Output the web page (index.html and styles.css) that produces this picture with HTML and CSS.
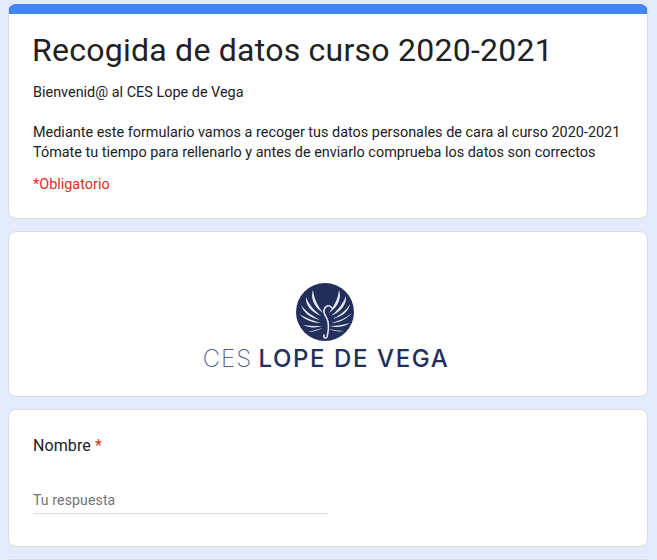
FILE: index.html
```html
<!DOCTYPE html>
<html lang="es">
<head>
  <meta charset="UTF-8" />
  <meta name="viewport" content="width=device-width, initial-scale=1.0"/>
  <title>Recogida de datos curso 2020-2021</title>
  <link rel="stylesheet" href="styles.css">
</head>
<body>
  <form class="form">
    <div class="card header">
      <h1>Recogida de datos curso 2020-2021</h1>
      <p class="intro">Bienvenid@ al CES Lope de Vega</p>
      <p class="desc">Mediante este formulario vamos a recoger tus datos personales de cara al curso 2020-2021<br>Tómate tu tiempo para rellenarlo y antes de enviarlo comprueba los datos son correctos</p>
      <p class="required">*Obligatorio</p>
    </div>

    <div class="card logo-card">
      <svg class="logo" viewBox="0 0 58 58" aria-hidden="true">
        <circle cx="29" cy="29" r="29" fill="#222f5b"/>
        <g fill="#e4e7ef">
          <path d="M17 7C14 15 18 24 27 30C22 23 18 16 17 7Z"/>
          <path d="M10 14C9 22 15 29 25 33C19 28 13 22 10 14Z"/>
          <path d="M5 22C7 29 14 35 24 37C17 33 10 29 5 22Z"/>
          <path d="M3 31C9 37 17 40 25 40C17 38 10 35 3 31Z"/>
          <path d="M7 42C13 45 20 45 26 43C20 43 13 43 7 42Z"/>
          <path d="M12 49C17 49 23 47 27 45C22 46 17 48 12 49Z"/>
          <path d="M43 7C46 15 42 24 33 30C38 23 42 16 43 7Z"/>
          <path d="M50 13C51 21 45 29 35 33C41 28 47 21 50 13Z"/>
          <path d="M54 21C53 28 46 34 36 36C43 33 50 28 54 21Z"/>
          <path d="M56 30C51 36 43 40 35 40C43 38 50 35 56 30Z"/>
          <path d="M54 40C48 44 40 45 34 43C40 43 47 42 54 40Z"/>
          <path d="M48 48C43 49 37 48 33 46C38 47 43 48 48 48Z"/>
        </g>
        <path class="bird" d="M36 25C33 21 29 23 28 27C27 31 31 34 32 39C33 44 32 50 31 54C30 56 27 55 28 52"/>
      </svg>
      <div class="logo-text"><span class="thin">CES</span> <span class="name">LOPE DE VEGA</span></div>
    </div>

    <div class="card question">
      <div class="label">Nombre <span class="star">*</span></div>
      <input class="answer" type="text" placeholder="Tu respuesta">
    </div>

    <div class="card next"></div>
  </form>
</body>
</html>
```

FILE: styles.css
```css
* { box-sizing: border-box; }
html, body { height: 560px; overflow: hidden; }
body {
  margin: 0;
  background: #e3ebfd;
  font-family: Roboto, Arial, sans-serif;
  color: #202124;
}
.form {
  width: 640px;
  height: 556px;
  margin-left: 8px;
  padding-top: 4px;
  display: flex;
  flex-direction: column;
  gap: 12px;
}
.card {
  flex: none;
  background: #fff;
  border: 1px solid #dadce0;
  border-radius: 8px;
}
.header {
  height: 215px;
  padding: 20px 24px 0;
  border-top: 10px solid #4285f4;
}
.header h1 {
  margin: 0 0 0 -1px;
  font-size: 32px;
  font-weight: 400;
  line-height: 32px;
  letter-spacing: 0.25px;
}
.header p { margin: 0; font-size: 14.43px; line-height: 20px; }
.intro { padding-top: 17px; }
.desc { padding-top: 20px; }
.header .required { padding-top: 12px; color: #d93025; }
.logo-card {
  height: 166px;
  display: flex;
  flex-direction: column;
  align-items: center;
  padding-top: 51px;
}
.logo { width: 58px; height: 58px; display: block; margin-right: 6px; flex: none; }
.bird { fill: none; stroke: #e4e7ef; stroke-width: 1.6; stroke-linecap: round; }
.logo-text {
  margin-top: 4px;
  margin-right: 4px;
  font-family: Inter, Arial, sans-serif;
  font-size: 24px;
  line-height: 28px;
  font-weight: 500;
  color: #222f5b;
  white-space: nowrap;
}
.name { letter-spacing: 1.6px; }
.thin { font-weight: 200; color: #56618a; letter-spacing: 1px; }
.question {
  height: 138px;
  padding: 26px 24px 0;
}
.label { font-size: 16px; line-height: 20px; letter-spacing: 0.1px; }
.star { color: #d93025; }
.answer {
  display: block;
  width: 295px;
  height: 30px;
  margin-top: 28px;
  padding: 2px 0 0;
  border: 0;
  border-bottom: 1px solid #dadce0;
  font-family: inherit;
  font-size: 14px;
  letter-spacing: 0.15px;
  outline: none;
}
.answer::placeholder { color: #70757a; opacity: 1; }
.next { height: 1px; border-width: 1px 0 0; }
```
